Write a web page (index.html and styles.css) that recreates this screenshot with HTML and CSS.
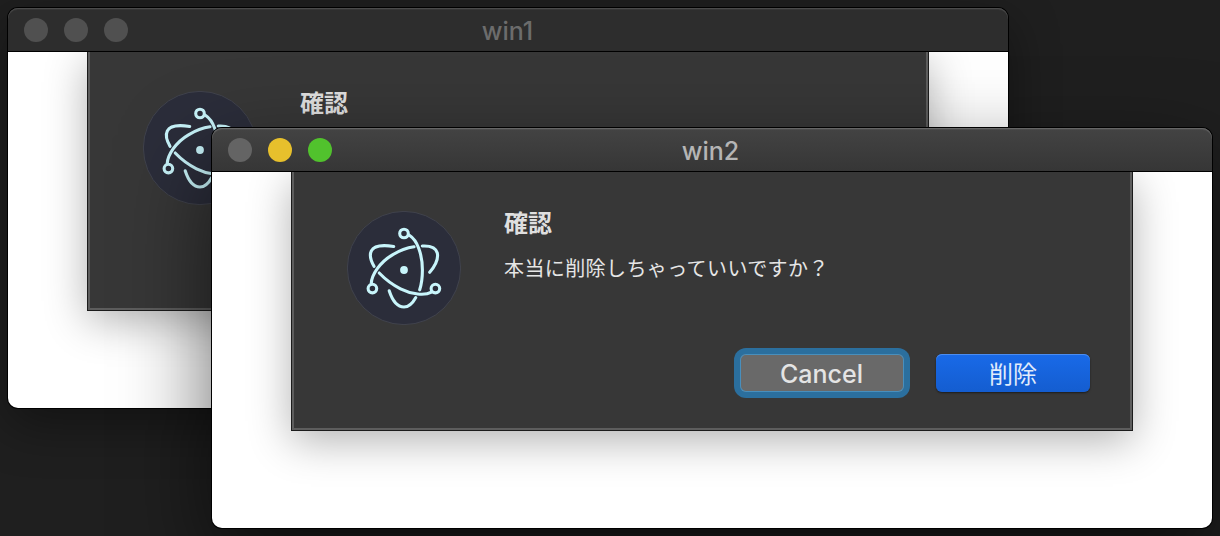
FILE: index.html
```html
<!DOCTYPE html>
<html lang="ja">
<head>
<meta charset="utf-8">
<title>win2</title>
<link rel="stylesheet" href="styles.css">
</head>
<body>
<svg width="0" height="0" class="defs">
  <symbol id="electron" viewBox="0 0 114 114">
    <circle cx="57" cy="57" r="56.6" fill="#2b2d3a" stroke="#454852" stroke-width=".8"/>
    <g fill="none" stroke="#c8f5fb" stroke-width="3.1" stroke-linecap="round">
      <path d="M62.7 24.5C70 29 75.4 43 75.4 59C75.4 66.500 74.400 73.500 72.700 78.800"/>
      <path d="M24.200 72.800C24.500 64 33 51 45.500 43.800C53 39.300 60 36.800 67 35.800"/>
      <path d="M32.200 62C37 67 45 73.500 53.500 77.800C65 83.500 77.500 85 84.500 81.200"/>
      <path d="M46.700 35.500C36 33.500 27 34.800 24.300 40C22.300 44 23.700 49.500 27 55.300"/>
      <path d="M75.300 35C83 34.600 89 37 90.300 42C91.500 47.500 88 55 82.700 61.300"/>
      <path d="M42.200 79.800C45.500 90 51 96 57 96C61.500 96 65.500 92.500 68.800 86.500"/>
      <circle cx="57" cy="22.500" r="4.300"/>
      <circle cx="25.400" cy="77.600" r="4.300"/>
      <circle cx="88.400" cy="77.600" r="4.300"/>
    </g>
    <circle cx="57" cy="59" r="3.900" fill="#c8f5fb"/>
  </symbol>
</svg>

<section class="window window-back">
  <header class="titlebar">
    <div class="lights"><i></i><i></i><i></i></div>
    <h1 class="title">win1</h1>
  </header>
  <div class="content">
    <div class="sheet">
      <svg class="icon"><use href="#electron"/></svg>
      <div class="body">
        <h2 class="heading">確認</h2>
      </div>
    </div>
  </div>
</section>

<section class="window window-front">
  <header class="titlebar">
    <div class="lights"><i></i><i class="minimize"></i><i class="maximize"></i></div>
    <h1 class="title">win2</h1>
  </header>
  <div class="content">
    <div class="sheet">
      <svg class="icon"><use href="#electron"/></svg>
      <div class="body">
        <h2 class="heading">確認</h2>
        <p class="message">本当に削除しちゃっていいですか？</p>
        <div class="actions">
          <button class="button cancel">Cancel</button>
          <button class="button primary">削除</button>
        </div>
      </div>
    </div>
  </div>
</section>
</body>
</html>
```
FILE: styles.css
```css
* { box-sizing: border-box; }

body {
  margin: 0;
  width: 1220px;
  height: 536px;
  position: relative;
  overflow: hidden;
  background: #1f1f1f;
  font-family: Inter, "Noto Sans CJK JP", sans-serif;
}

.defs { position: absolute; }

/* Windows are placed freely on the desktop */
.window {
  position: absolute;
  width: 1000px;
  height: 400px;
  display: flex;
  flex-direction: column;
  border-radius: 10px;
}

.window-back {
  left: 8px;
  top: 8px;
  box-shadow: 0 0 0 1px #000, 0 16px 50px rgba(0, 0, 0, .4);
}

.window-front {
  left: 212px;
  top: 128px;
  box-shadow: 0 0 0 1px #000, 0 36px 90px rgba(0, 0, 0, .6);
}

.titlebar {
  display: grid;
  grid-template-columns: 1fr auto 1fr;
  align-items: center;
  height: 44px;
  padding: 0 17px 0 16px;
  border-bottom: 1px solid #000;
  border-radius: 10px 10px 0 0;
  background: #2d2d2d;
  box-shadow: inset 0 1px #4b4b4b, inset 0 2px #363636;
}

.window-front .titlebar {
  padding-right: 19px;
  background: linear-gradient(#434343, #363636);
  box-shadow: inset 0 1px #666, inset 0 2px #4c4c4c;
}

.lights { display: flex; gap: 16px; }

.lights i {
  width: 24px;
  height: 24px;
  border-radius: 50%;
  background: #505050;
}

.window-front .lights i { background: #646464; }
.window-front .lights .minimize { background: #e7c02c; }
.window-front .lights .maximize { background: #51c22d; }

.title {
  margin: 2px 0 0;
  font-size: 25px;
  line-height: 30px;
  font-weight: 450;
  color: #6c6c6c;
}

.window-front .title { color: #b5b5b5; }

.content {
  flex: 1;
  overflow: hidden;
  border-radius: 0 0 10px 10px;
  background: #fff;
}

.sheet {
  display: flex;
  gap: 43px;
  width: 842px;
  height: 259px;
  margin-left: 79px;
  padding: 39px 40px 0 53px;
  border: 1px solid #1c1c1c;
  border-top: 0;
  background: #373737;
  box-shadow: inset 2px 0 #5d5d5d, inset -2px 0 #5d5d5d, inset 0 -2px #5d5d5d,
    0 10px 40px rgba(0, 0, 0, .3);
}

.icon {
  flex: none;
  width: 114px;
  height: 114px;
  margin-left: 2px;
}

.body {
  flex: 1;
  display: flex;
  flex-direction: column;
}

.heading {
  margin: -2px 0 0;
  font-size: 24px;
  line-height: 30px;
  font-weight: 700;
  color: #dfdfdf;
}

.message {
  margin: 15px 0 0;
  font-size: 20px;
  line-height: 30px;
  letter-spacing: .4px;
  font-weight: 400;
  color: #e6e6e6;
}

.actions {
  display: flex;
  justify-content: flex-end;
  gap: 32px;
  margin: 70px 2px 0 0;
}

.button {
  height: 38px;
  padding: 2px 0 0;
  border: 0;
  border-radius: 6px;
  font: 500 25px/36px Inter, "Noto Sans CJK JP", sans-serif;
  color: #e4e4e4;
}

.cancel {
  width: 164px;
  padding-right: 1px;
  background: #696969;
  box-shadow: inset 0 0 0 1px #488fbd, 0 0 0 6px #2b6f9e;
}

.primary {
  width: 154px;
  padding-top: 3px;
  font-size: 24px;
  line-height: 35px;
  font-weight: 400;
  color: #e1ecfb;
  background: linear-gradient(#196ae8, #145dd0);
  box-shadow: inset 0 1px #4c8df0, 0 1px 2px rgba(0, 0, 0, .5);
}
```
